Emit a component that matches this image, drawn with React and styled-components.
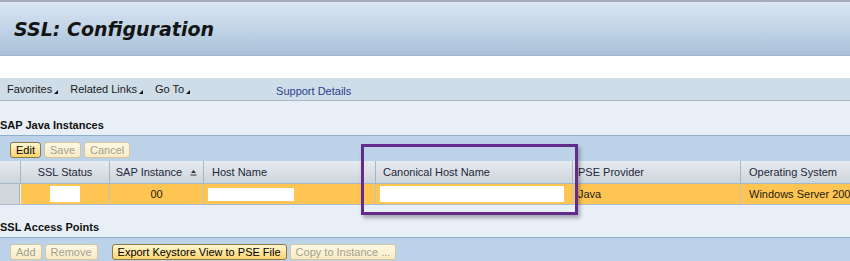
import React from "react";
import styled, { createGlobalStyle } from "styled-components";

const GlobalStyle = createGlobalStyle`
  html, body { margin: 0; padding: 0; background: #fff; }
  body { font-family: "Liberation Sans", Arial, sans-serif; font-size: 11px; color: #000; }
`;

const Page = styled.div`
  position: relative;
  width: 850px;
  height: 261px;
  overflow: hidden;
  background: #fff;
`;

const Header = styled.div`
  height: 53px;
  border-top: 2px solid #a3acb8;
  border-bottom: 1px solid #a6b6c8;
  background: linear-gradient(#dae6f2, #a9c1da);
  display: flex;
  align-items: center;
  padding-left: 14px;
`;

const Title = styled.h1`
  margin: 0;
  font-family: "DejaVu Sans", Verdana, sans-serif;
  font-size: 19px;
  font-weight: bold;
  font-style: italic;
  color: #141414;
`;

const Gap = styled.div`
  height: 22px;
`;

const Toolbar = styled.div`
  height: 22px;
  background: #cfdde8;
  border-bottom: 1px solid #a6b9ca;
  display: flex;
  align-items: center;
  padding-left: 7px;
  color: #1a1a1a;
`;

const Menu = styled.span`
  position: relative;
  margin-right: ${(p) => p.$gap}px;
  &::after {
    content: "";
    position: absolute;
    right: -6px;
    bottom: 1px;
    border-left: 4px solid transparent;
    border-bottom: 4px solid #111;
  }
`;

const LinkText = styled.span`
  color: #2b3f8f;
  margin-top: 3px;
`;

const SectionTitle = styled.div`
  height: ${(p) => p.$h}px;
  background: #e8eff6;
  display: flex;
  align-items: flex-end;
  font-weight: bold;
  color: #111;
  padding-bottom: ${(p) => p.$pb}px;
  box-sizing: border-box;
`;

const ButtonBar = styled.div`
  height: ${(p) => p.$h}px;
  border-top: 1px solid #8fb0cc;
  background: #bcd2e8;
  display: flex;
  align-items: flex-start;
  padding: 6px 0 0 10px;
  box-sizing: border-box;
  gap: 3px;
`;

const Button = styled.button`
  height: 16px;
  padding: 0 5px;
  margin-right: ${(p) => p.$mr || 0}px;
  font-family: "Liberation Sans", Arial, sans-serif;
  font-size: 11px;
  line-height: 14px;
  border-radius: 3px;
  border: 1px solid ${(p) => (p.$disabled ? "#d6c79c" : "#8d7a44")};
  background: ${(p) =>
    p.$disabled
      ? "linear-gradient(#fff8e4, #f8ebc4)"
      : "linear-gradient(#fff6d2, #fbd56e)"};
  color: ${(p) => (p.$disabled ? "#a39f92" : "#000")};
`;

const Grid = styled.div`
  display: grid;
  grid-template-columns: 21px 89px 94px 172px 197px 168px 200px;
  width: 850px;
  overflow: hidden;
`;

const HeadCell = styled.div`
  height: 22px;
  border-right: 1px solid #a7b7c7;
  border-bottom: 1px solid #a7b7c7;
  background: linear-gradient(#e6ebef, #cdd4db);
  color: #1d2839;
  display: flex;
  align-items: center;
  justify-content: ${(p) => (p.$center ? "center" : "flex-start")};
  padding-left: ${(p) => p.$pl || 0}px;
  white-space: nowrap;
  gap: 8px;
`;

const Cell = styled.div`
  height: 20px;
  border-right: 1px solid #b9c3cc;
  border-bottom: 1px solid #aabcce;
  background: #fec553;
  color: #1e1a10;
  display: flex;
  align-items: center;
  justify-content: ${(p) => (p.$center ? "center" : "flex-start")};
  padding-left: ${(p) => p.$pl || 0}px;
  white-space: nowrap;
  overflow: hidden;
`;

const Selector = styled(Cell)`
  background: #d2d7dc;
  border-right: 1px solid #f2f4f6;
  box-shadow: inset -1px 0 0 #aab4be;
`;

const Redacted = styled.span`
  display: block;
  width: ${(p) => p.$w}px;
  height: ${(p) => p.$h}px;
  background: #fff;
`;

const Highlight = styled.div`
  position: absolute;
  left: 361px;
  top: 144px;
  width: 211px;
  height: 65px;
  border: 3px solid #622b8c;
  box-shadow: 2px 3px 4px rgba(0, 0, 0, 0.3);
  pointer-events: none;
`;

const SortIcon = () => (
  <svg width="7" height="7" viewBox="0 0 7 7">
    <path d="M3.5 1 L6 4 L1 4 Z" fill="#333" />
    <rect x="0.5" y="5.5" width="6" height="1" fill="#333" />
  </svg>
);

export default function App() {
  return (
    <Page>
      <GlobalStyle />
      <Header>
        <Title>SSL: Configuration</Title>
      </Header>
      <Gap />
      <Toolbar>
        <Menu $gap={18}>Favorites</Menu>
        <Menu $gap={18}>Related Links</Menu>
        <Menu $gap={92}>Go To</Menu>
        <LinkText>Support Details</LinkText>
      </Toolbar>
      <SectionTitle $h={34} $pb={4}>SAP Java Instances</SectionTitle>
      <ButtonBar $h={26}>
        <Button>Edit</Button>
        <Button $disabled>Save</Button>
        <Button $disabled>Cancel</Button>
      </ButtonBar>
      <Grid>
        <HeadCell />
        <HeadCell $center>SSL Status</HeadCell>
        <HeadCell $center>
          SAP Instance <SortIcon />
        </HeadCell>
        <HeadCell $pl={8}>Host Name</HeadCell>
        <HeadCell $pl={7}>Canonical Host Name</HeadCell>
        <HeadCell $pl={5}>PSE Provider</HeadCell>
        <HeadCell $pl={8}>Operating System</HeadCell>

        <Selector />
        <Cell $center>
          <Redacted $w={30} $h={16} />
        </Cell>
        <Cell $center>00</Cell>
        <Cell $pl={4}>
          <Redacted $w={86} $h={13} />
        </Cell>
        <Cell $pl={4}>
          <Redacted $w={184} $h={16} />
        </Cell>
        <Cell $pl={5}>Java</Cell>
        <Cell $pl={8}>Windows Server 200</Cell>
      </Grid>
      <SectionTitle $h={32} $pb={4}>SSL Access Points</SectionTitle>
      <ButtonBar $h={30}>
        <Button $disabled>Add</Button>
        <Button $disabled $mr={11}>Remove</Button>
        <Button>Export Keystore View to PSE File</Button>
        <Button $disabled>Copy to Instance ...</Button>
      </ButtonBar>
      <Highlight />
    </Page>
  );
}
